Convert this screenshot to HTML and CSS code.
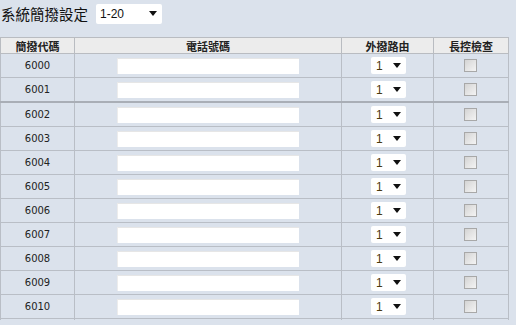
FILE: index.html
```html
<!DOCTYPE html>
<html lang="zh-Hant">
<head>
<meta charset="utf-8">
<link rel="stylesheet" href="styles.css">
</head>
<body>
<div class="top">
  <span class="title">系統簡撥設定</span>
  <div class="sel sel-range"><span>1-20</span><span class="arrow"></span></div>
</div>
<table class="grid">
  <colgroup><col class="c1"><col class="c2"><col class="c3"><col class="c4"></colgroup>
  <thead>
    <tr><th>簡撥代碼</th><th>電話號碼</th><th>外撥路由</th><th>長控檢查</th></tr>
  </thead>
  <tbody>
    <tr><td>6000</td><td><div class="inp"></div></td><td><div class="sel sel-route"><span>1</span><span class="arrow"></span></div></td><td><div class="chk"></div></td></tr>
    <tr class="sep"><td>6001</td><td><div class="inp"></div></td><td><div class="sel sel-route"><span>1</span><span class="arrow"></span></div></td><td><div class="chk"></div></td></tr>
    <tr><td>6002</td><td><div class="inp"></div></td><td><div class="sel sel-route"><span>1</span><span class="arrow"></span></div></td><td><div class="chk"></div></td></tr>
    <tr><td>6003</td><td><div class="inp"></div></td><td><div class="sel sel-route"><span>1</span><span class="arrow"></span></div></td><td><div class="chk"></div></td></tr>
    <tr><td>6004</td><td><div class="inp"></div></td><td><div class="sel sel-route"><span>1</span><span class="arrow"></span></div></td><td><div class="chk"></div></td></tr>
    <tr><td>6005</td><td><div class="inp"></div></td><td><div class="sel sel-route"><span>1</span><span class="arrow"></span></div></td><td><div class="chk"></div></td></tr>
    <tr><td>6006</td><td><div class="inp"></div></td><td><div class="sel sel-route"><span>1</span><span class="arrow"></span></div></td><td><div class="chk"></div></td></tr>
    <tr><td>6007</td><td><div class="inp"></div></td><td><div class="sel sel-route"><span>1</span><span class="arrow"></span></div></td><td><div class="chk"></div></td></tr>
    <tr><td>6008</td><td><div class="inp"></div></td><td><div class="sel sel-route"><span>1</span><span class="arrow"></span></div></td><td><div class="chk"></div></td></tr>
    <tr><td>6009</td><td><div class="inp"></div></td><td><div class="sel sel-route"><span>1</span><span class="arrow"></span></div></td><td><div class="chk"></div></td></tr>
    <tr><td>6010</td><td><div class="inp"></div></td><td><div class="sel sel-route"><span>1</span><span class="arrow"></span></div></td><td><div class="chk"></div></td></tr>
    <tr class="tail"><td></td><td></td><td></td><td></td></tr>
  </tbody>
</table>
</body>
</html>
```

FILE: styles.css
```css
html, body {
  margin: 0;
  padding: 0;
  background: #dbe2ec;
  font-family: "DejaVu Sans", "Noto Sans CJK TC", sans-serif;
  color: #222;
  height: 100%;
  overflow: hidden;
}
.top {
  display: flex;
  align-items: center;
  height: 29px;
  padding: 0 0 0 1px;
  gap: 8px;
  margin-bottom: 8px;
}
.title {
  font-family: "Noto Sans CJK TC", sans-serif;
  font-size: 14.5px;
  color: #111;
  line-height: 20px;
  margin-top: -2px;
}
.sel {
  display: flex;
  align-items: center;
  justify-content: space-between;
  background: #fff;
  border-radius: 2px;
  box-sizing: border-box;
  font-family: "Liberation Sans", Arial, sans-serif;
  color: #111;
}
.sel-range {
  width: 66px;
  height: 20px;
  padding: 0 5px 0 4px;
  font-size: 12px;
  margin-top: -2px;
}
.arrow {
  width: 0;
  height: 0;
  border-left: 4px solid transparent;
  border-right: 4px solid transparent;
  border-top: 5px solid #111;
}
.grid {
  border-collapse: collapse;
  table-layout: fixed;
  width: 508px;
}
.c1 { width: 74px; }
.c2 { width: 267px; }
.c3 { width: 92px; }
.c4 { width: 75px; }
.grid th {
  background: #ececec;
  border: 1px solid #b9bcc1;
  height: 15px;
  padding: 0;
  font-family: "Noto Sans CJK TC", sans-serif;
  font-size: 11px;
  font-weight: bold;
  color: #222;
  line-height: 14px;
}
.grid td {
  border: 1px solid #b9bec6;
  height: 23px;
  padding: 0;
  text-align: center;
  font-size: 10px;
  color: #222;
}
.grid tr.sep td { border-bottom: 2px solid #a9aeb6; }
.grid tr.tail td {
  height: 1px;
  border-bottom: none;
}
.inp {
  width: 182px;
  height: 16px;
  margin-left: 42px;
  background: #fff;
  box-sizing: border-box;
  border-top: 1px solid #e6e6e6;
  border-left: 1px solid #ececec;
}
.sel-route {
  width: 35px;
  height: 17px;
  margin-left: 29px;
  padding: 0 5px 0 5px;
  font-size: 12px;
}
.sel-route span:first-child { color: #4a3a10; }
.chk {
  width: 11px;
  height: 11px;
  margin-left: 30px;
  border: 1px solid #a8a8a8;
  background: linear-gradient(135deg, #d4d4d4, #f4f4f4);
}
```
